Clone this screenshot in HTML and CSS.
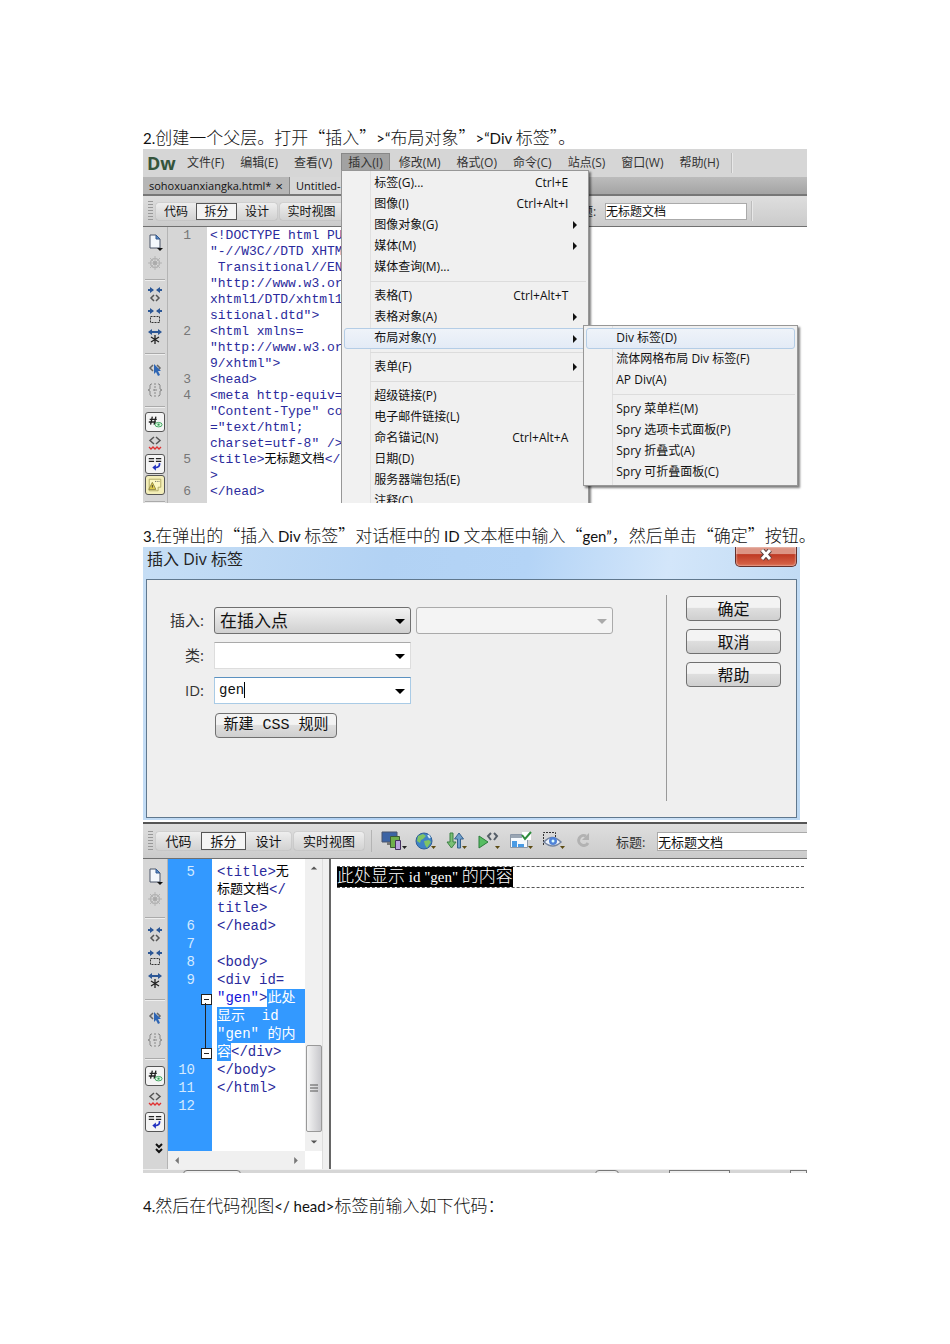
FILE: index.html
```html
<!DOCTYPE html>
<html lang="zh-CN">
<head>
    <meta charset="UTF-8">
    <meta name="viewport" content="width=device-width, initial-scale=1.0">
    <title>无标题文档</title>
    <link rel="stylesheet" href="styles.css">
</head>
<body>
    <svg class="sprite" aria-hidden="true">
        <symbol id="i-file" viewBox="0 0 18 18">
            <path d="M4 2h6l4 4v9H4z" fill="#f4f8fc" stroke="#4a5468" />
            <path d="M10 2v4h4z" fill="#5b8cc8" stroke="#345a90" />
            <path d="M11 15h6l-3 3z" fill="#111" />
        </symbol>
        <symbol id="i-wheel" viewBox="0 0 18 18">
            <g fill="none" stroke="#b4b4b4">
                <circle cx="9" cy="9" r="4.5" stroke-width="1.5" />
                <path d="M9 2v14M2 9h14M4 4l10 10M14 4L4 14" />
            </g>
            <circle cx="9" cy="9" r="2" fill="#aaa" />
        </symbol>
        <symbol id="i-collapse-tag" viewBox="0 0 18 18">
            <path d="M2 4h5M11 4h5" stroke="#2c5796" stroke-width="2" />
            <path d="M4 1l4 3-4 3zM14 1l-4 3 4 3z" fill="#2c5796" />
            <path d="M8 9l-3 3 3 3M10 9l3 3-3 3" fill="none" stroke="#555" stroke-width="1.5" />
        </symbol>
        <symbol id="i-collapse-sel" viewBox="0 0 18 18">
            <path d="M2 4h5M11 4h5" stroke="#2c5796" stroke-width="2" />
            <path d="M4 1l4 3-4 3zM14 1l-4 3 4 3z" fill="#2c5796" />
            <path d="M4.500 9.500h9v6h-9z" fill="none" stroke="#333" stroke-dasharray="2 1" />
        </symbol>
        <symbol id="i-expand" viewBox="0 0 18 18">
            <path d="M4 4h10" stroke="#2c5796" stroke-width="2" />
            <path d="M6 1L2 4l4 3zM12 1l4 3-4 3z" fill="#2c5796" />
            <path d="M9 7v9M5 9l8 5M13 9l-8 5" stroke="#222" stroke-width="1.300" />
        </symbol>
        <symbol id="i-pick" viewBox="0 0 18 18">
            <path d="M7 5L4 8l3 3M11 5l3 3-3 3" fill="none" stroke="#666" stroke-width="1.500" />
            <path d="M8 4v10l2-2 2 4 2-1-2-4h3z" fill="#2f66b4" />
        </symbol>
        <symbol id="i-braces" viewBox="0 0 18 18">
            <path d="M6 3H5L4 4v4L2 9l2 1v4l1 1h1M12 3h1l1 1v4l2 1-2 1v4l-1 1h-1" fill="none" stroke="#888" />
            <path d="M9 2v14M7 9h4" stroke="#888" stroke-dasharray="2 1" />
        </symbol>
        <symbol id="i-hash" viewBox="0 0 18 18">
            <path d="M6 3L4 12M10 3L8 12M3 6h8M2 9h8" stroke="#222" stroke-width="1.500" />
            <ellipse cx="13" cy="12" rx="4" ry="2.500" fill="#dff5e3" stroke="#35a056" />
            <circle cx="13" cy="12" r="1.300" fill="#35a056" />
        </symbol>
        <symbol id="i-error" viewBox="0 0 18 18">
            <path d="M8 3L4 6.500 8 10M10 3l4 3.500-4 3.500" fill="none" stroke="#555" stroke-width="1.500" />
            <path d="M3 13l2 2 2-2 2 2 2-2 2 2 2-2" fill="none" stroke="#e03030" stroke-width="1.300" />
        </symbol>
        <symbol id="i-wrap" viewBox="0 0 18 18">
            <path d="M2 3h6M10 3h6M2 6h6M10 6h6" stroke="#222" stroke-width="1.500" />
            <path d="M14 8q1 5-5 5" fill="none" stroke="#2030c0" stroke-width="2" />
            <path d="M10 9.500v7L6 13z" fill="#2030c0" />
        </symbol>
        <symbol id="i-warn" viewBox="0 0 18 18">
            <path d="M2.500 2.500h13v9h-3v4h-10z" fill="#fdf8c4" stroke="#a9a25c" />
            <path d="M6 6l4 8H2z" fill="#e4cf4c" stroke="#8c8345" />
            <path d="M6 9v3" stroke="#333" />
            <path d="M9 5h1M11 5h1M13 5h1" stroke="#555" />
        </symbol>
        <symbol id="i-more" viewBox="0 0 18 18">
            <path d="M10 4l3 3 3-3M10 9l3 3 3-3" fill="none" stroke="#111" stroke-width="2" />
        </symbol>
        <symbol id="i-devices" viewBox="0 0 26 22">
            <path d="M1 2h15v10H1z" fill="#3c64a4" stroke="#49546c" />
            <path d="M6 15h5v-3H6z" fill="#777" />
            <path d="M9.500 6.500h9v11h-9z" fill="#6fae4c" stroke="#3c5c32" />
            <path d="M14.500 10.500h5v9h-5z" fill="#b9a2dc" stroke="#45305e" />
            <path d="M21 16h5l-2.500 3z" fill="#222" />
        </symbol>
        <symbol id="i-globe" viewBox="0 0 26 22">
            <circle cx="11" cy="11" r="8" fill="#3f83c6" stroke="#305f96" />
            <path d="M5 6l5-2 3 2-3 3-2 1-1 3-3-2zM11 11l5-1 2 2-4 6-2-3z" fill="#7fc464" />
            <path d="M15 5l2 3" stroke="#d4ecfa" stroke-width="2" />
            <path d="M18 16h5l-2.500 3z" fill="#5c4b12" />
        </symbol>
        <symbol id="i-updown" viewBox="0 0 26 22">
            <path d="M5 3h3v9h3l-4.500 6L2 12h3z" fill="#7ac074" stroke="#3b8044" />
            <path d="M12.500 18h3V9h3L14 3 9.500 9h3z" fill="#6f9fcc" stroke="#35618e" />
            <path d="M17 16h5l-2.500 3z" fill="#5c4b12" />
        </symbol>
        <symbol id="i-run" viewBox="0 0 26 22">
            <path d="M2 6l9 6-9 6z" fill="#57bd62" stroke="#2d7c3c" />
            <path d="M14 3l-3 3 3 4M17 3l3 3-3 4" fill="none" stroke="#555e68" stroke-width="2" />
            <path d="M18 16h5l-2.500 3z" fill="#5c4b12" />
        </symbol>
        <symbol id="i-check" viewBox="0 0 26 22">
            <path d="M1.500 4.500h17v13h-17z" fill="#f6fafe" stroke="#8b98a8" />
            <path d="M2 5h11v3H2z" fill="#9aa6b4" />
            <path d="M3 11h5v6H3zM9 14h6v3H9z" fill="#4a9be4" />
            <path d="M13 2h9v8h-9z" fill="#fff" />
            <path d="M13 5l3 4 6-7" fill="none" stroke="#2e8c3c" stroke-width="2" />
            <path d="M19 16h5l-2.500 3z" fill="#5c4b12" />
        </symbol>
        <symbol id="i-eye" viewBox="0 0 26 22">
            <path d="M2.500 15V2.500h12V7" fill="none" stroke="#333" stroke-dasharray="2 1" />
            <path d="M3 12q8-9 17 0-8 8-17 0z" fill="#eef3fb" stroke="#7484a0" stroke-width="1.500" />
            <circle cx="12" cy="11" r="4" fill="#4f82d8" />
            <circle cx="12" cy="11" r="1.500" fill="#dff" />
            <path d="M19 16h5l-2.500 3z" fill="#5c4b12" />
        </symbol>
        <symbol id="i-refresh" viewBox="0 0 26 22">
            <path d="M13 6a5 5 0 1 0 2 7" fill="none" stroke="#b2b2b2" stroke-width="3" />
            <path d="M16 3v7h-7z" fill="#b2b2b2" />
        </symbol>
    </svg>

    <main class="page">
        <p><span class="latin">2.</span>创建一个父层。打开“插入”<span class="latin">&gt;“</span>布局对象”<span class="latin">&gt;“Div </span>标签”。</p>

        <section class="shot editor-window">
            <nav class="menubar">
                <span class="logo">Dw</span>
                <button>文件(F)</button>
                <button>编辑(E)</button>
                <button>查看(V)</button>
                <div class="menu-host">
                    <button class="open">插入(I)</button>
                    <ul class="menu insert-menu">
                        <li>标签(G)...<kbd>Ctrl+E</kbd></li>
                        <li>图像(I)<kbd>Ctrl+Alt+I</kbd></li>
                        <li class="more">图像对象(G)</li>
                        <li class="more">媒体(M)</li>
                        <li>媒体查询(M)...</li>
                        <li class="sep"></li>
                        <li>表格(T)<kbd>Ctrl+Alt+T</kbd></li>
                        <li class="more">表格对象(A)</li>
                        <li class="more current">布局对象(Y)
                            <ul class="menu submenu">
                                <li class="current">Div 标签(D)</li>
                                <li>流体网格布局 Div 标签(F)</li>
                                <li>AP Div(A)</li>
                                <li class="sep"></li>
                                <li>Spry 菜单栏(M)</li>
                                <li>Spry 选项卡式面板(P)</li>
                                <li>Spry 折叠式(A)</li>
                                <li>Spry 可折叠面板(C)</li>
                            </ul>
                        </li>
                        <li class="sep"></li>
                        <li class="more">表单(F)</li>
                        <li class="sep"></li>
                        <li>超级链接(P)</li>
                        <li>电子邮件链接(L)</li>
                        <li>命名锚记(N)<kbd>Ctrl+Alt+A</kbd></li>
                        <li>日期(D)</li>
                        <li>服务器端包括(E)</li>
                        <li>注释(C)</li>
                    </ul>
                </div>
                <button>修改(M)</button>
                <button>格式(O)</button>
                <button>命令(C)</button>
                <button>站点(S)</button>
                <button>窗口(W)</button>
                <button>帮助(H)</button>
                <span class="bar-end"></span>
            </nav>

            <div class="tabs">
                <div class="tab">sohoxuanxiangka.html* <span>×</span></div>
                <div class="tab active">Untitled-</div>
            </div>

            <div class="toolbar">
                <span class="grip"></span>
                <div class="views">
                    <button>代码</button>
                    <button class="on">拆分</button>
                    <button>设计</button>
                </div>
                <button class="live">实时视图</button>
                <label for="title-one">标题:</label>
                <input type="text" id="title-one" value="无标题文档">
                <span class="bar-end"></span>
            </div>

            <div class="workspace">
                <div class="tools">
                    <svg><use href="#i-file" /></svg>
                    <svg><use href="#i-wheel" /></svg>
                    <hr>
                    <svg><use href="#i-collapse-tag" /></svg>
                    <svg><use href="#i-collapse-sel" /></svg>
                    <svg><use href="#i-expand" /></svg>
                    <hr>
                    <svg><use href="#i-pick" /></svg>
                    <svg><use href="#i-braces" /></svg>
                    <hr>
                    <svg class="boxed"><use href="#i-hash" /></svg>
                    <svg><use href="#i-error" /></svg>
                    <svg class="boxed"><use href="#i-wrap" /></svg>
                    <svg class="boxed warn"><use href="#i-warn" /></svg>
                    <hr>
                </div>
                <div class="code">
                    <div class="line"><i>1</i><code>&lt;!DOCTYPE html PU</code></div>
                    <div class="line"><i></i><code>"-//W3C//DTD XHTM</code></div>
                    <div class="line"><i></i><code> Transitional//EN</code></div>
                    <div class="line"><i></i><code>"http://www.w3.or</code></div>
                    <div class="line"><i></i><code>xhtml1/DTD/xhtml1</code></div>
                    <div class="line"><i></i><code>sitional.dtd"&gt;</code></div>
                    <div class="line"><i>2</i><code>&lt;html xmlns=</code></div>
                    <div class="line"><i></i><code>"http://www.w3.or</code></div>
                    <div class="line"><i></i><code>9/xhtml"&gt;</code></div>
                    <div class="line"><i>3</i><code>&lt;head&gt;</code></div>
                    <div class="line"><i>4</i><code>&lt;meta http-equiv=</code></div>
                    <div class="line"><i></i><code>"Content-Type" co</code></div>
                    <div class="line"><i></i><code>="text/html;</code></div>
                    <div class="line"><i></i><code>charset=utf-8" /&gt;</code></div>
                    <div class="line"><i>5</i><code>&lt;title&gt;<b>无标题文档</b>&lt;/</code></div>
                    <div class="line"><i></i><code>&gt;</code></div>
                    <div class="line"><i>6</i><code>&lt;/head&gt;</code></div>
                </div>
            </div>
        </section>

        <p><span class="latin">3.</span>在弹出的“插入<span class="latin"> Div </span>标签”对话框中的<span class="latin"> ID </span>文本框中输入“<span class="latin">gen”</span>，然后单击“确定”按钮。</p>

        <section class="shot">
            <div class="dialog">
                <header>
                    <h2>插入 Div 标签</h2>
                    <button class="close" aria-label="关闭">
                        <svg viewBox="0 0 16 12"><path d="M4 1l8 9M12 1L4 10" stroke="#5a4040" stroke-width="5" /><path d="M4 1l8 9M12 1L4 10" stroke="#fff" stroke-width="3" /></svg>
                    </button>
                </header>
                <form class="dialog-body">
                    <div class="fields">
                        <div class="field">
                            <label for="place">插入:</label>
                            <span class="combo raised"><select id="place"><option>在插入点</option></select></span>
                            <span class="combo off"><select aria-label="标签" disabled><option></option></select></span>
                        </div>
                        <div class="field">
                            <label for="cls">类:</label>
                            <span class="combo"><select id="cls"><option></option></select></span>
                        </div>
                        <div class="field">
                            <label for="divid">ID:</label>
                            <span class="combo focus"><input type="text" id="divid" value="gen"></span>
                        </div>
                        <button type="button" class="push rule">新建 CSS 规则</button>
                    </div>
                    <div class="actions">
                        <button type="button" class="push">确定</button>
                        <button type="button" class="push">取消</button>
                        <button type="button" class="push">帮助</button>
                    </div>
                </form>
            </div>

            <div class="split-window">
                <div class="toolbar">
                    <span class="grip"></span>
                    <div class="views">
                        <button>代码</button>
                        <button class="on">拆分</button>
                        <button>设计</button>
                    </div>
                    <button class="live">实时视图</button>
                    <div class="icons">
                        <svg><use href="#i-devices" /></svg>
                        <svg><use href="#i-globe" /></svg>
                        <svg><use href="#i-updown" /></svg>
                        <svg><use href="#i-run" /></svg>
                        <svg><use href="#i-check" /></svg>
                        <svg><use href="#i-eye" /></svg>
                        <svg><use href="#i-refresh" /></svg>
                    </div>
                    <label for="title-two">标题:</label>
                    <input type="text" id="title-two" value="无标题文档">
                </div>

                <div class="workspace">
                    <div class="tools">
                        <svg><use href="#i-file" /></svg>
                        <svg><use href="#i-wheel" /></svg>
                        <hr>
                        <svg><use href="#i-collapse-tag" /></svg>
                        <svg><use href="#i-collapse-sel" /></svg>
                        <svg><use href="#i-expand" /></svg>
                        <hr>
                        <svg><use href="#i-pick" /></svg>
                        <svg><use href="#i-braces" /></svg>
                        <hr>
                        <svg class="boxed"><use href="#i-hash" /></svg>
                        <svg><use href="#i-error" /></svg>
                        <svg class="boxed"><use href="#i-wrap" /></svg>
                        <svg class="last"><use href="#i-more" /></svg>
                    </div>
                    <div class="code-pane">
                        <div class="code">
                            <div class="line"><i>5</i><code>&lt;title&gt;<b>无</b></code></div>
                            <div class="line"><i></i><code><b>标题文档</b>&lt;/</code></div>
                            <div class="line"><i></i><code>title&gt;</code></div>
                            <div class="line"><i>6</i><code>&lt;/head&gt;</code></div>
                            <div class="line"><i>7</i><code></code></div>
                            <div class="line"><i>8</i><code>&lt;body&gt;</code></div>
                            <div class="line"><i>9</i><code>&lt;div id=</code></div>
                            <div class="line fold-start"><i></i><code><em>"gen"</em>&gt;<mark class="fill">此处</mark></code></div>
                            <div class="line"><i></i><code><mark class="fill">显示  id</mark></code></div>
                            <div class="line"><i></i><code><mark class="fill">"gen" 的内</mark></code></div>
                            <div class="line fold-end"><i></i><code><mark>容</mark>&lt;/div&gt;</code></div>
                            <div class="line"><i>10</i><code>&lt;/body&gt;</code></div>
                            <div class="line"><i>11</i><code>&lt;/html&gt;</code></div>
                            <div class="line"><i>12</i><code></code></div>
                        </div>
                        <div class="vscroll">
                            <svg viewBox="0 0 10 6"><path d="M1 5l4-4 4 4z" fill="#555" /></svg>
                            <span class="thumb"><svg viewBox="0 0 8 10"><path d="M0 1h8M0 4h8M0 7h8" stroke="#555" /></svg></span>
                            <svg viewBox="0 0 10 6"><path d="M1 1l4 4 4-4z" fill="#555" /></svg>
                        </div>
                        <div class="hscroll">
                            <svg viewBox="0 0 6 10"><path d="M5 1L1 5l4 4z" fill="#777" /></svg>
                            <svg viewBox="0 0 6 10"><path d="M1 1l4 4-4 4z" fill="#777" /></svg>
                        </div>
                    </div>
                    <div class="divider"></div>
                    <div class="design">
                        <div class="block"><span>此处显示<small> id "gen" </small>的内容</span></div>
                    </div>
                </div>
                <div class="status">
                    <span class="crumb"></span>
                    <span class="zoom"></span>
                    <span class="size"></span>
                    <span class="speed"></span>
                </div>
            </div>
        </section>

        <p><span class="latin">4.</span>然后在代码视图<span class="latin">&lt;/ head&gt;</span>标签前输入如下代码：</p>
    </main>
</body>
</html>
```
FILE: styles.css
```css
:root {
    --bar: #d6d6d6;
    --code: #2a2a9c;
    --select: #3399ff;
    --ui: "Open Sans", "Noto Sans CJK SC", sans-serif;
    --song: "Noto Sans CJK SC", sans-serif;
}

* {
    box-sizing: border-box;
}

body {
    margin: 0;
    background: #fff;
    color: #111;
    font-family: var(--song);
}

button,
input,
select {
    font: inherit;
    color: inherit;
    border: none;
    border-radius: 0;
    margin: 0;
    padding: 0;
    background: none;
}

.sprite {
    position: absolute;
    width: 0;
    height: 0;
}

.page {
    padding: 125px 143px;
}

.page p {
    margin: 20px 0 0;
    font-size: 17px;
    font-weight: 300;
    line-height: 24px;
    white-space: nowrap;
}

.page p:first-child {
    margin-top: 0;
}

.latin {
    font-family: Lato, sans-serif;
    font-size: 15px;
    font-weight: 400;
    line-height: 0;
}

.shot {
    position: relative;
    overflow: hidden;
}

/* Menu bar */
.editor-window {
    font-family: var(--ui);
    font-size: 12px;
    height: 354px;
}

.menubar {
    display: flex;
    align-items: center;
    height: 28px;
    background: var(--bar);
    color: #333;
}

.menubar button {
    height: 20px;
    padding: 0 8px;
    line-height: 18px;
    white-space: nowrap;
}

.menubar .open {
    background: #a2a2a2;
    border: 1px solid #888;
    padding: 0 6px;
}

.logo {
    width: 36px;
    padding-left: 4px;
    font-family: "Open Sans", sans-serif;
    font-size: 18px;
    font-weight: 700;
    line-height: 24px;
    color: #35543c;
}

.bar-end {
    width: 2px;
    height: 20px;
    margin-left: 4px;
    border-left: 1px solid #bcbcbc;
    border-right: 1px solid #e8e8e8;
}

.menu-host {
    position: relative;
    margin: 0 1px;
}

.menu {
    position: absolute;
    z-index: 2;
    margin: 0;
    padding: 2px;
    list-style: none;
    border: 1px solid #979797;
    background: linear-gradient(90deg, #f1f1f1 28px, #e0e0e0 28px, #e0e0e0 29px, #f0f0f0 29px);
    box-shadow: 2px 2px 2px rgba(0, 0, 0, 0.5);
    color: #111;
}

.insert-menu {
    top: 17px;
    left: 0;
    width: 248px;
}

.submenu {
    top: -4px;
    left: 238px;
    width: 215px;
}

.menu li {
    position: relative;
    display: flex;
    justify-content: space-between;
    height: 21px;
    padding: 0 17px 0 29px;
    line-height: 20px;
    white-space: nowrap;
    border: 1px solid transparent;
    border-width: 0 1px;
}

.menu .sep {
    height: 8px;
    margin-left: 26px;
    padding: 0;
    border: none;
    background: linear-gradient(#dcdcdc, #dcdcdc) 0 3px / 100% 1px no-repeat;
}

.menu .current {
    border: 1px solid #b4cde6;
    border-radius: 3px;
    background: linear-gradient(#eff3f9, #e3ebf6);
    line-height: 18px;
}

.menu .current li {
    line-height: 20px;
}

.menu .current .current {
    line-height: 18px;
}

.menu kbd {
    font: inherit;
}

.more::after {
    content: "";
    position: absolute;
    right: 8px;
    top: 6px;
    border: 4px solid transparent;
    border-left-color: #111;
    border-right: none;
}

/* Document tabs */
.tabs {
    display: flex;
    height: 19px;
    background: linear-gradient(#bcbcbc, #a4a4a4);
    border-bottom: 2px solid #777;
}

.tab {
    display: flex;
    justify-content: space-between;
    width: 147px;
    padding: 0 6px;
    font-size: 11px;
    line-height: 18px;
    border-right: 1px solid #888;
    background: #b6b6b6;
    white-space: nowrap;
}

.tab span {
    font-size: 13px;
}

.tab.active {
    background: #d8d8d8;
}

/* Document toolbar */
.toolbar {
    display: flex;
    align-items: center;
    height: 31px;
    padding-left: 5px;
    background: linear-gradient(#dedede, #cbcbcb);
    border-bottom: 1px solid #707070;
}

.grip {
    width: 5px;
    height: 20px;
    margin-right: 3px;
    background: repeating-linear-gradient(#999 0 1px, transparent 1px 3px);
}

.views {
    display: flex;
    border-radius: 3px;
    background: linear-gradient(#eee, #d2d2d2);
    box-shadow: 0 0 1px #777;
}

.toolbar button {
    flex: none;
    width: 40px;
    height: 17px;
    line-height: 15px;
}

.toolbar .on {
    width: 41px;
    background: #f4f4f4;
    border: 1px solid #555;
}

.toolbar .live {
    width: 63px;
    margin-left: 3px;
    border-radius: 3px;
    background: linear-gradient(#eee, #d2d2d2);
    box-shadow: 0 0 1px #777;
}

.toolbar label {
    flex: none;
    margin-left: 226px;
    width: 36px;
    color: #333;
}

.toolbar input {
    width: 142px;
    height: 17px;
    line-height: 15px;
    background: #fff;
    border: 1px solid #aaa;
}

/* Code view */
.workspace {
    display: flex;
}

.tools {
    flex: none;
    display: flex;
    flex-direction: column;
    align-items: center;
    width: 25px;
    padding-top: 5px;
    background: var(--bar);
    border-right: 1px solid #b4b4b4;
}

.tools svg {
    flex: none;
    width: 18px;
    height: 18px;
    margin: 1px 0 2px;
}

.tools .boxed {
    width: 20px;
    height: 20px;
    margin: 0 0 1px;
    padding: 1px;
    border: 1px solid #555;
    border-radius: 3px;
    background: #f4f4f4;
}

.tools .warn {
    background: #f3eeb8;
}

.tools hr {
    width: 20px;
    height: 2px;
    margin: 5px 0 4px;
    border: none;
    border-top: 1px solid #aaa;
    border-bottom: 1px solid #eee;
}

.code {
    flex: 1;
    min-width: 0;
    font-family: "Liberation Mono", "Noto Sans CJK SC", monospace;
    font-size: 13px;
    line-height: 16px;
    color: var(--code);
    background: linear-gradient(90deg, var(--bar) 39px, #fff 39px);
}

.editor-window .code {
    height: 276px;
    padding-top: 1px;
    overflow: hidden;
}

.line {
    position: relative;
    display: flex;
    height: 16px;
}

.line i {
    flex: none;
    width: 23px;
    margin-right: 19px;
    font-style: normal;
    text-align: right;
    color: #777;
}

.line code {
    flex: 1;
    display: flex;
    font-family: inherit;
    white-space: pre;
}

.line b {
    font-size: 12px;
    font-weight: 400;
    color: #000;
}

.line em {
    font-style: normal;
    color: #1414d8;
}

.line mark {
    background: var(--select);
    color: #fff;
}

.line .fill {
    flex: 1;
}

/* Insert Div dialog */
.dialog {
    margin-right: 7px;
    padding: 0 3px 2px;
    background: linear-gradient(100deg, #c6def5, #b2d2f4 35%, #b4d4f6 55%, #d3e6fa 75%, #bcd8f2);
    font-family: var(--ui);
}

.dialog header {
    display: flex;
    justify-content: space-between;
    height: 32px;
}

.dialog h2 {
    margin: 0;
    padding-left: 1px;
    font-size: 16px;
    font-weight: 400;
    line-height: 25px;
    color: #222;
}

.close {
    width: 62px;
    height: 20px;
    border: 1px solid #63302c;
    border-top: none;
    border-radius: 0 0 5px 5px;
    background: linear-gradient(#dc9484 0 35%, #bf3a24 40%, #d8684c);
    box-shadow: inset 0 0 2px #fff;
}

.close svg {
    display: block;
    width: 16px;
    height: 12px;
    margin: 0 auto 4px;
}

.dialog-body {
    display: flex;
    padding: 15px 15px 16px 17px;
    border: 1px solid #60788e;
    background: #efefef;
}

.fields {
    flex: 1;
    padding-top: 11px;
}

.field {
    display: flex;
    align-items: center;
    height: 28px;
    margin-bottom: 7px;
    font-size: 15px;
    color: #333;
}

.field label {
    width: 40px;
    margin-right: 10px;
    line-height: 20px;
    text-align: right;
}

.combo {
    position: relative;
    width: 197px;
    height: 27px;
    margin-right: 5px;
    border: 1px solid #ddd;
    border-top-color: #aaa;
    background: #fff;
}

.combo select,
.combo input {
    appearance: none;
    display: block;
    width: 100%;
    height: 25px;
    padding-left: 5px;
    font-family: var(--song);
    font-size: 17px;
    line-height: 24px;
    color: #111;
    outline: none;
}

.combo::after {
    content: "";
    position: absolute;
    right: 5px;
    top: 11px;
    border: 5px solid transparent;
    border-top-color: #000;
    border-bottom: none;
    pointer-events: none;
}

.raised {
    border: 1px solid #707070;
    border-radius: 3px;
    background: linear-gradient(#f2f2f2, #d0d0d0);
}

.off {
    border: 1px solid #aaa;
    border-radius: 3px;
    background: #f4f4f4;
}

.off::after {
    border-top-color: #aaa;
}

.focus {
    border-color: #5b91c0 #a9cbe6 #a9cbe6;
}

.combo input {
    padding-left: 4px;
    font-family: "Liberation Mono", monospace;
    font-size: 14px;
}

/* text caret after the typed id */
.focus::before {
    content: "";
    position: absolute;
    left: 29px;
    top: 4px;
    width: 1px;
    height: 16px;
    background: #000;
}

.push {
    height: 25px;
    border: 1px solid #707070;
    border-radius: 4px;
    background: linear-gradient(#f3f3f3 0 45%, #dedede 50%, #cfcfcf);
    font-size: 16px;
    line-height: 22px;
    color: #111;
}

.rule {
    width: 122px;
    margin: 2px 0 0 51px;
    font-family: "Liberation Mono", "Noto Sans CJK SC", monospace;
    font-size: 15px;
    white-space: nowrap;
}

.actions {
    display: flex;
    flex-direction: column;
    gap: 8px;
    width: 115px;
    height: 206px;
    padding: 1px 0 0 19px;
    border-left: 1px solid #999;
}

/* Split view */
.split-window {
    margin-top: 2px;
    border-top: 2px solid #555;
    font-family: var(--ui);
}

.split-window .toolbar {
    height: 35px;
    font-size: 13px;
}

.split-window .toolbar button {
    width: 45px;
    height: 18px;
    line-height: 16px;
}

.split-window .toolbar .live {
    width: 70px;
}

.icons {
    flex: none;
    display: flex;
    gap: 6px;
    margin-left: 7px;
    padding-left: 9px;
    border-left: 1px solid #b4b4b4;
}

.icons svg {
    width: 26px;
    height: 22px;
}

.split-window .toolbar label {
    margin-left: 17px;
    width: 41px;
}

.split-window .toolbar input {
    flex: 1;
    min-width: 0;
    height: 19px;
    line-height: 16px;
    border-right: none;
}

.split-window .tools {
    padding-top: 6px;
}

.split-window .tools svg {
    margin: 2px 0 3px;
}

.split-window .tools .boxed {
    margin: 1px 0 2px;
}

.split-window .tools hr {
    margin: 6px 0 5px;
}

.split-window .tools .last {
    margin: 6px 0 0;
}

.code-pane {
    flex: none;
    display: grid;
    grid-template-columns: 137px 17px;
    grid-template-rows: 292px 18px;
}

.code-pane .code {
    padding-top: 4px;
    font-size: 14px;
    line-height: 18px;
    background: linear-gradient(90deg, var(--select) 44px, #fff 44px);
}

.code-pane .line {
    height: 18px;
}

.code-pane .line i {
    width: 27px;
    margin-right: 22px;
    color: #d4eaff;
}

.code-pane .line b {
    font-size: 13px;
}

.fold-start::before,
.fold-end::before {
    content: "";
    position: absolute;
    left: 33px;
    top: 5px;
    width: 9px;
    height: 9px;
    border: 1px solid #222;
    background: linear-gradient(#222, #222) center / 5px 1px no-repeat #fff;
}

.fold-start::after {
    content: "";
    position: absolute;
    left: 37px;
    top: 14px;
    width: 1px;
    height: 45px;
    background: #222;
}

.vscroll,
.hscroll {
    display: flex;
    align-items: center;
    justify-content: space-between;
    background: #f0f0f0;
}

.vscroll {
    flex-direction: column;
    padding: 6px 0;
}

.vscroll svg {
    width: 8px;
    height: 6px;
}

.thumb {
    display: flex;
    align-items: center;
    justify-content: center;
    width: 16px;
    height: 87px;
    margin-top: auto;
    margin-bottom: 7px;
    border: 1px solid #999;
    border-radius: 2px;
    background: linear-gradient(90deg, #f4f4f4, #c8c8cc);
}

.thumb svg {
    height: 10px;
}

.hscroll {
    padding: 0 6px;
}

.hscroll svg {
    width: 6px;
    height: 9px;
}

.divider {
    flex: none;
    width: 7px;
    background: #f0f0f0;
    border-left: 1px solid #ddd;
}

.design {
    flex: 1;
    min-width: 0;
    padding: 7px 3px 0 6px;
    border-left: 2px solid #666;
}

.block {
    height: 22px;
    border: 1px dashed #555;
    border-width: 1px 0;
}

.block span {
    display: block;
    width: fit-content;
    height: 20px;
    background: #000;
    color: #fff;
    font-family: "Liberation Serif", "Noto Sans CJK SC", serif;
    font-size: 17px;
    font-weight: 300;
    line-height: 20px;
    white-space: nowrap;
}

.block small {
    font-size: 15px;
}

.status {
    display: flex;
    height: 4px;
    overflow: hidden;
    background: var(--bar);
    border-top: 1px solid #eee;
}

.status span {
    flex: none;
    height: 8px;
    border: 1px solid #777;
    background: #eee;
}

.crumb {
    width: 58px;
    margin-left: 40px;
    border-radius: 4px;
}

.zoom {
    width: 24px;
    margin-left: 354px;
    border-radius: 4px;
}

.size {
    width: 61px;
    margin-left: 50px;
}

.speed {
    width: 17px;
    margin-left: auto;
}
```
